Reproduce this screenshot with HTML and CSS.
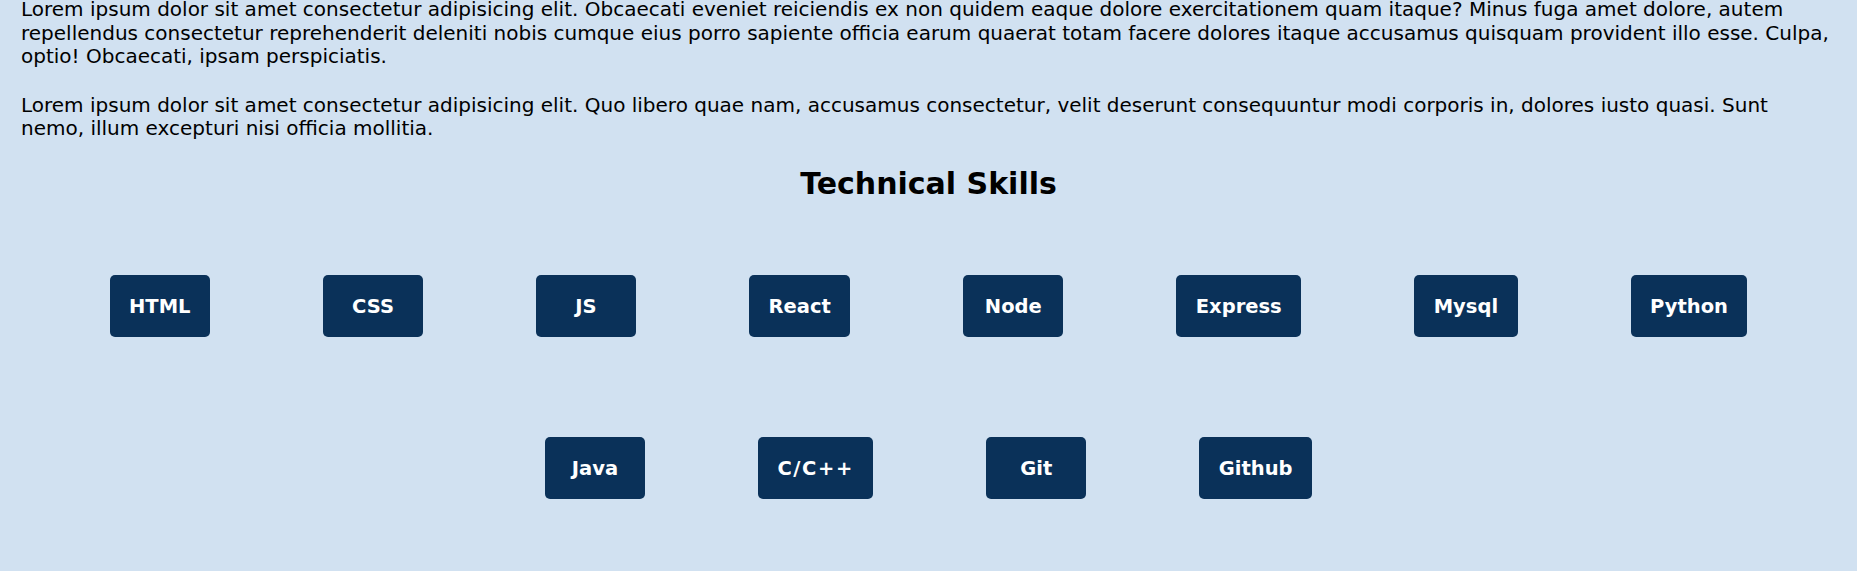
FILE: index.html
```html
<!DOCTYPE html>
<html lang="en">
<head>
<meta charset="utf-8">
<title>About</title>
<link rel="stylesheet" href="styles.css">
</head>
<body>
<main class="about">
  <p class="para">Lorem ipsum dolor sit amet consectetur adipisicing elit. Obcaecati eveniet reiciendis ex non quidem eaque dolore exercitationem quam itaque? Minus fuga amet dolore, autem repellendus consectetur reprehenderit deleniti nobis cumque eius porro sapiente officia earum quaerat totam facere dolores itaque accusamus quisquam provident illo esse. Culpa, optio! Obcaecati, ipsam perspiciatis.</p>
  <p class="para">Lorem ipsum dolor sit amet consectetur adipisicing elit. Quo libero quae nam, accusamus consectetur, velit deserunt consequuntur modi corporis in, dolores iusto quasi. Sunt nemo, illum excepturi nisi officia mollitia.</p>
  <h2 class="skills-title">Technical Skills</h2>
  <div class="skills">
    <span class="skill">HTML</span>
    <span class="skill">CSS</span>
    <span class="skill">JS</span>
    <span class="skill">React</span>
    <span class="skill">Node</span>
    <span class="skill">Express</span>
    <span class="skill">Mysql</span>
    <span class="skill">Python</span>
    <span class="skill">Java</span>
    <span class="skill skill-symbols">C/C++</span>
    <span class="skill">Git</span>
    <span class="skill">Github</span>
  </div>
</main>
</body>
</html>
```

FILE: styles.css
```css
html, body {
  margin: 0;
  padding: 0;
  background: #d1e1f1;
}

body {
  font-family: "DejaVu Sans", Verdana, sans-serif;
  color: #000;
}

.about {
  padding: 0 21px;
  margin-top: -2px;
}

.para {
  font-size: 20px;
  line-height: 23.6px;
  margin: 0 0 25px 0;
}

.skills-title {
  text-align: center;
  font-size: 30px;
  font-weight: bold;
  margin: 0;
  padding-top: 2.5px;
  line-height: 32px;
}

.skills {
  display: flex;
  flex-wrap: wrap;
  justify-content: center;
  margin-top: 25px;
}

.skill {
  display: block;
  box-sizing: border-box;
  min-width: 100px;
  text-align: center;
  margin: 50px 56.5px;
  padding: 19.5px;
  font-size: 19.5px;
  font-weight: bold;
  color: #fff;
  background: #0a3159;
  border-radius: 5px;
}

.skill-symbols {
  letter-spacing: 1.6px;
}
```
